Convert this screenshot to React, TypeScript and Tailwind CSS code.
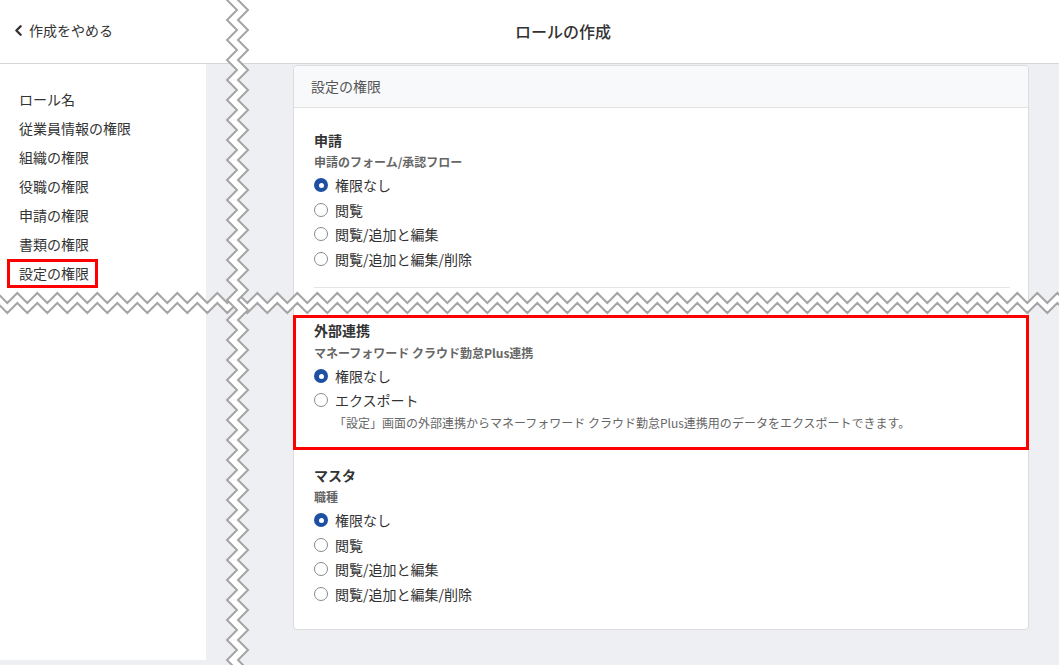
import React from "react";
import { ChevronLeft } from "lucide-react";

function Radio({ checked, label }: { checked?: boolean; label: string }) {
  return (
    <div className="flex h-[24.5px] items-center gap-[7px]">
      {checked ? (
        <span className="flex h-[14px] w-[14px] items-center justify-center rounded-full bg-[#1d50a3]">
          <span className="h-[5px] w-[5px] rounded-full bg-white" />
        </span>
      ) : (
        <span className="h-[14px] w-[14px] rounded-full border border-[#8a8a8a] bg-white" />
      )}
      <span className="text-[14px] leading-none text-[#333]">{label}</span>
    </div>
  );
}

function HZigzag() {
  const w = 1080;
  const up: string[] = [];
  const low: string[] = [];
  for (let i = 0; ; i++) {
    const x = -2.7 + i * 10;
    if (x > w + 10) break;
    const peak = i % 2 === 0;
    up.push(`${x},${peak ? 3 : 13}`);
    low.push(`${x},${peak ? 13 : 23}`);
  }
  const poly = [...up, ...low.slice().reverse()].join(" ");
  return (
    <svg className="pointer-events-none absolute left-0 top-[290px]" width={1059} height={26}>
      <polygon points={poly} fill="#ffffff" />
      <polyline points={up.join(" ")} fill="none" stroke="#a5a5a5" strokeWidth={2} />
      <polyline points={low.join(" ")} fill="none" stroke="#a5a5a5" strokeWidth={2} />
    </svg>
  );
}

function VZigzag() {
  const h = 680;
  const l: string[] = [];
  const r: string[] = [];
  for (let i = 0; ; i++) {
    const y = -10 + i * 10;
    if (y > h) break;
    const left = i % 2 === 1;
    l.push(`${left ? 3 : 13},${y}`);
    r.push(`${left ? 14 : 24},${y}`);
  }
  const poly = [...l, ...r.slice().reverse()].join(" ");
  return (
    <svg className="pointer-events-none absolute left-[224px] top-0" width={28} height={665}>
      <polygon points={poly} fill="#ffffff" />
      <polyline points={l.join(" ")} fill="none" stroke="#a5a5a5" strokeWidth={2} />
      <polyline points={r.join(" ")} fill="none" stroke="#a5a5a5" strokeWidth={2} />
    </svg>
  );
}

const navItems = [
  "ロール名",
  "従業員情報の権限",
  "組織の権限",
  "役職の権限",
  "申請の権限",
  "書類の権限",
  "設定の権限",
];

export default function App() {
  return (
    <div className="relative min-h-[665px] w-full overflow-hidden bg-[#eeeff3] font-['Noto_Sans_CJK_JP','Noto_Sans',sans-serif] text-[#333]">
      <header className="flex h-[64px] items-center border-b border-[#d6d6d6] bg-white pb-[3px] pl-[10px]">
        <div className="flex items-center gap-[2px]">
          <ChevronLeft size={17} strokeWidth={3.4} className="text-[#333]" />
          <span className="text-[14px] text-[#333]">作成をやめる</span>
        </div>
        <div className="ml-[402px] pt-[1px] text-[16px] font-medium text-[#333]">ロールの作成</div>
      </header>

      <div className="flex">
        <aside className="h-[596px] w-[206px] shrink-0 bg-white pl-[19px] pt-[21px]">
          {navItems.map((item, i) => (
            <div key={item} className="relative flex h-[29px] items-center text-[14px] text-[#333]">
              {item}
              {i === navItems.length - 1 && (
                <span className="absolute left-[-12px] top-0 h-[29px] w-[91px] border-[3px] border-[#ff0000]" />
              )}
            </div>
          ))}
        </aside>

        <main className="flex-1 pl-[87px] pr-[30px] pt-px">
          <div className="rounded-[4px] border border-[#dcdcdc] bg-white">
            <div className="flex h-[42px] items-center rounded-t-[4px] border-b border-[#e2e2e2] bg-[#f8f9fb] pl-[17px] text-[14px] text-[#555]">
              設定の権限
            </div>

            <div className="pl-[20px] pr-[18px] pt-[21px]">
              <div className="flex h-[22px] items-center text-[14px] font-bold text-[#333]">申請</div>
              <div className="flex h-[22px] items-center text-[12px] font-bold text-[#666]">申請のフォーム/承認フロー</div>
              <Radio checked label="権限なし" />
              <Radio label="閲覧" />
              <Radio label="閲覧/追加と編集" />
              <Radio label="閲覧/追加と編集/削除" />
              <div className="mt-[16px] border-t border-[#e4e4e4]" />
            </div>

            <div className="-mx-px mt-[27px] border-[3px] border-[#ff0000] pb-[13px] pl-[18px] pt-[1px]">
              <div className="flex h-[22px] items-center text-[14px] font-bold text-[#333]">外部連携</div>
              <div className="flex h-[23px] items-center text-[12px] font-bold text-[#666]">マネーフォワード クラウド勤怠Plus連携</div>
              <div className="flex h-[24px] items-center">
                <Radio checked label="権限なし" />
              </div>
              <div className="flex h-[24px] items-center">
                <Radio label="エクスポート" />
              </div>
              <div className="flex h-[22px] items-center pl-[20px] text-[12px] text-[#666]">
                「設定」画面の外部連携からマネーフォワード クラウド勤怠Plus連携用のデータをエクスポートできます。
              </div>
            </div>

            <div className="pb-[23px] pl-[20px] pt-[14px]">
              <div className="flex h-[22px] items-center text-[14px] font-bold text-[#333]">マスタ</div>
              <div className="flex h-[22px] items-center text-[12px] font-bold text-[#666]">職種</div>
              <Radio checked label="権限なし" />
              <Radio label="閲覧" />
              <Radio label="閲覧/追加と編集" />
              <Radio label="閲覧/追加と編集/削除" />
            </div>
          </div>
        </main>
      </div>

      <HZigzag />
      <VZigzag />
    </div>
  );
}
